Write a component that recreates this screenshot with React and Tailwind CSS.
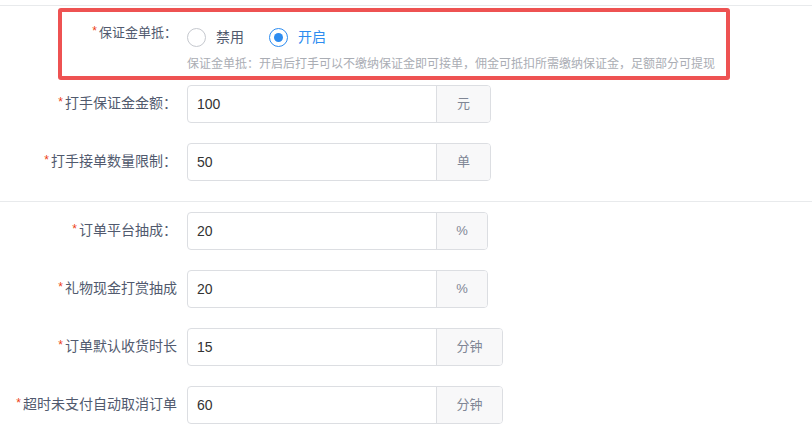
import React from 'react';

const rows1 = [
    { label: '打手保证金金额：', value: '100', unit: '元', unitW: 'w-[54px]' },
    { label: '打手接单数量限制：', value: '50', unit: '单', unitW: 'w-[54px]' },
];

const rows2 = [
    { label: '订单平台抽成：', value: '20', unit: '%', unitW: 'w-[51px]' },
    { label: '礼物现金打赏抽成', value: '20', unit: '%', unitW: 'w-[51px]' },
    { label: '订单默认收货时长', value: '15', unit: '分钟', unitW: 'w-[66px]' },
    { label: '超时未支付自动取消订单', value: '60', unit: '分钟', unitW: 'w-[66px]' },
];

function Label({ text, className = '' }) {
    return (
        <span className={`text-[#515a6e] ${className}`}>
            <span className="text-[#ed4014] text-[12px] mr-[2px] relative top-[-2px]">*</span>
            {text}
        </span>
    );
}

function FieldRow({ label, value, unit, unitW }) {
    return (
        <div className="flex items-center h-[38px] mb-[20px]">
            <div className="w-[177px] shrink-0 text-right text-[14px] leading-[20px] -mt-[2px]">
                <Label text={label} />
            </div>
            <div className="ml-[10px] flex h-[38px] border border-[#dcdee2] rounded-[4px] overflow-hidden">
                <div className="w-[248px] flex items-center pl-[9px] text-[14px] text-[#333]">{value}</div>
                <div className={`${unitW} flex items-center justify-center bg-[#f8f8f9] border-l border-[#dcdee2] text-[13px] text-[#808695]`}>
                    {unit}
                </div>
            </div>
        </div>
    );
}

export default function App() {
    return (
        <div className="w-[812px] h-[434px] overflow-hidden bg-white font-['Liberation_Sans','Noto_Sans_CJK_SC',sans-serif]">
            <div className="pt-[5px]">
                <div className="border-t border-[#e8eaec]" />
            </div>

            <div className="ml-[58px] mt-[2px] w-[672px] h-[72px] border-4 border-[#ee5252] rounded-[3px] flex">
                <div className="w-[115px] shrink-0 text-right pt-[11px] text-[13px] leading-[20px]">
                    <Label text="保证金单抵：" />
                </div>
                <div className="ml-[10px] pt-[15px] min-w-0">
                    <div className="flex items-center h-[20px] text-[14px]">
                        <span className="w-[19px] h-[19px] rounded-full border border-[#c5c8ce] bg-white" />
                        <span className="ml-[10px] text-[#515a6e]">禁用</span>
                        <span className="ml-[25px] w-[19px] h-[19px] rounded-full border border-[#2d8cf0] bg-white flex items-center justify-center">
                            <span className="w-[9px] h-[9px] rounded-full bg-[#2d8cf0]" />
                        </span>
                        <span className="ml-[10px] text-[#2d8cf0]">开启</span>
                    </div>
                    <div className="mt-[8px] text-[12px] leading-[18px] text-[#aaadb4] whitespace-nowrap">
                        保证金单抵：开启后打手可以不缴纳保证金即可接单，佣金可抵扣所需缴纳保证金，足额部分可提现
                    </div>
                </div>
            </div>

            <div className="mt-[5px]">
                {rows1.map((r) => (
                    <FieldRow key={r.label} {...r} />
                ))}
            </div>

            <div className="border-t border-[#e8eaec]" />

            <div className="mt-[10px]">
                {rows2.map((r) => (
                    <FieldRow key={r.label} {...r} />
                ))}
            </div>
        </div>
    );
}
